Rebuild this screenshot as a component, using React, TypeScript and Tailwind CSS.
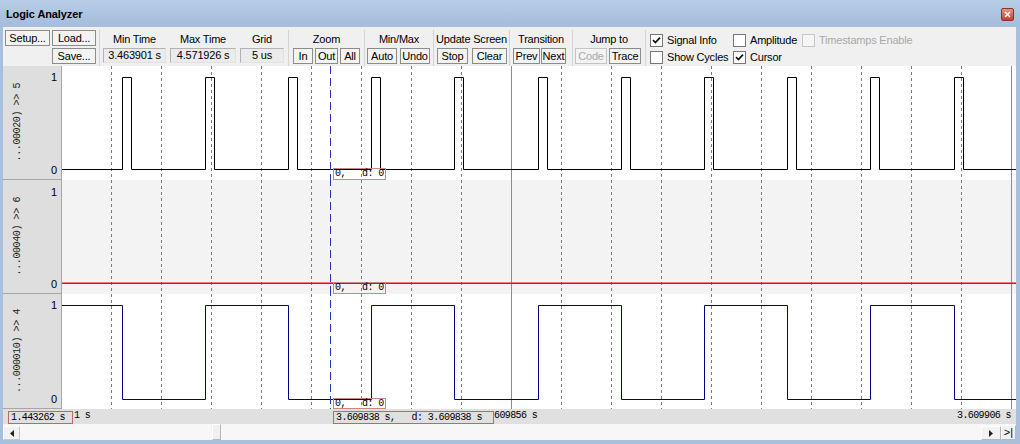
import React from 'react';

const SANS = "font-['Liberation_Sans',Arial,sans-serif]";
const MONO = "font-['Liberation_Mono','DejaVu_Sans_Mono',monospace]";

const PLOT_W = 954;
// signal edges, one every 83.2px
const EDGES = Array.from({ length: 11 }, (_, k) => Math.round(59.5 + 83.2 * k));
// 5 us grid, 50px apart
const GRID = Array.from({ length: 19 }, (_, k) => 49.5 + 50 * k);
const CURSOR_X = 268.5;

function Btn({ label, className, disabled }: { label: string; className: string; disabled?: boolean }) {
  return (
    <div
      className={`h-[16px] flex items-center justify-center border bg-[#f3f3f3] text-[11px] leading-none tracking-[-0.2px] ${
        disabled ? 'border-[#c4c4c4] text-[#a8a8a8]' : 'border-[#8c8c8c] text-black'
      } ${className}`}
    >
      {label}
    </div>
  );
}

function Field({ title, value, className }: { title: string; value: string; className: string }) {
  return (
    <div className={`flex flex-col ${className}`}>
      <div className="h-[17px] pt-[2px] flex items-center justify-center text-[11px] tracking-[-0.2px]">{title}</div>
      <div className="mt-[1px] h-[15px] border border-[#b2b2b2] border-r-[#e2e2e2] border-b-[#e2e2e2] bg-[#ebebeb] flex items-center justify-center text-[11px] tracking-[-0.2px] leading-none">
        {value}
      </div>
    </div>
  );
}

function Group({ title, className, children }: { title: string; className: string; children: React.ReactNode }) {
  return (
    <div className={`border-l border-[#d4d4d4] flex flex-col shrink-0 ${className}`}>
      <div className="h-[17px] pt-[2px] flex items-center justify-center text-[11px] tracking-[-0.2px] whitespace-nowrap">
        {title}
      </div>
      <div className="mt-[1px] flex">{children}</div>
    </div>
  );
}

function Check({ label, checked, disabled }: { label: string; checked?: boolean; disabled?: boolean }) {
  return (
    <div className="flex items-center gap-[4px] h-[13px]">
      <div
        className={`w-[13px] h-[13px] border flex items-center justify-center ${
          disabled ? 'border-[#c6c6c6] bg-[#f5f5f5]' : 'border-[#777] bg-white'
        }`}
      >
        {checked && (
          <svg width="9" height="9" viewBox="0 0 9 9">
            <path d="M1 4.2 L3.4 6.6 L8 1.6" fill="none" stroke="#111" strokeWidth="1.7" />
          </svg>
        )}
      </div>
      <span className={`text-[11px] tracking-[-0.2px] whitespace-nowrap ${disabled ? 'text-[#a9a9a9]' : 'text-black'}`}>
        {label}
      </span>
    </div>
  );
}

function Toolbar() {
  return (
    <div className={`h-[39px] bg-[#f0f0f0] flex pt-[3px] text-black ${SANS}`}>
      <div className="w-[96px] shrink-0 pl-[2px] grid grid-cols-[45px_44px] gap-x-[2px] gap-y-[2px] content-start">
        <Btn label="Setup..." className="w-[45px]" />
        <Btn label="Load..." className="w-[44px]" />
        <div />
        <Btn label="Save..." className="w-[44px]" />
      </div>
      <div className="w-[189px] shrink-0 border-l border-[#d4d4d4] pl-[3px] flex gap-[4px]">
        <Field title="Min Time" value="3.463901 s" className="w-[63px]" />
        <Field title="Max Time" value="4.571926 s" className="w-[66px]" />
        <Field title="Grid" value="5 us" className="w-[44px]" />
      </div>
      <Group title="Zoom" className="w-[76px]">
        <div className="pl-[4px] flex gap-[2px]">
          <Btn label="In" className="w-[20px]" />
          <Btn label="Out" className="w-[23px]" />
          <Btn label="All" className="w-[20px]" />
        </div>
      </Group>
      <Group title="Min/Max" className="w-[69px]">
        <div className="pl-[2px] flex gap-[3px]">
          <Btn label="Auto" className="w-[30px]" />
          <Btn label="Undo" className="w-[30px]" />
        </div>
      </Group>
      <Group title="Update Screen" className="w-[76px]">
        <div className="pl-[3px] flex gap-[4px]">
          <Btn label="Stop" className="w-[31px]" />
          <Btn label="Clear" className="w-[35px]" />
        </div>
      </Group>
      <Group title="Transition" className="w-[63px]">
        <div className="pl-[3px] flex gap-[1px]">
          <Btn label="Prev" className="w-[27px]" />
          <Btn label="Next" className="w-[25px]" />
        </div>
      </Group>
      <Group title="Jump to" className="w-[73px]">
        <div className="pl-[2px] flex gap-[2px]">
          <Btn label="Code" className="w-[32px]" disabled />
          <Btn label="Trace" className="w-[32px]" />
        </div>
      </Group>
      <div className="flex-1 border-l border-[#d4d4d4] pl-[4px] pt-[4px]">
        <div className="grid grid-cols-[83px_69px_auto] gap-y-[4px]">
          <Check label="Signal Info" checked />
          <Check label="Amplitude" />
          <Check label="Timestamps Enable" disabled />
          <Check label="Show Cycles" />
          <Check label="Cursor" checked />
        </div>
      </div>
    </div>
  );
}

function Grid({ h }: { h: number }) {
  return (
    <>
      {GRID.map((x, i) =>
        i === 8 || i === 18 ? (
          <line key={i} x1={x} x2={x} y1={0} y2={h} stroke="#8c8c8c" strokeWidth="1" />
        ) : (
          <line key={i} x1={x} x2={x} y1={0} y2={h} stroke="#7c7c7c" strokeWidth="1" strokeDasharray="3 3" />
        )
      )}
    </>
  );
}

function pulses(lo: number, hi: number) {
  let d = `M0 ${lo}`;
  for (const e of EDGES) d += ` H${e + 0.5} V${hi} H${e + 9.5} V${lo}`;
  return d + ` H${PLOT_W}`;
}

function square(lo: number, hi: number) {
  let d = `M0 ${hi}`;
  let level = hi;
  for (const e of EDGES) {
    level = level === hi ? lo : hi;
    d += ` H${e + 0.5} V${level}`;
  }
  return d + ` H${PLOT_W}`;
}

function Label({ name, oneTop, zeroBottom }: { name: string; oneTop: string; zeroBottom: string }) {
  return (
    <div className="w-[59px] shrink-0 bg-[#dedede] border-r border-b border-[#a6a6a6] flex">
      <div className="w-[28px] flex items-center justify-center">
        <span className={`${MONO} text-[10px] tracking-[-0.4px] text-[#222] whitespace-pre [writing-mode:vertical-rl] rotate-180`}>
          {name}
        </span>
      </div>
      <div className={`flex-1 flex flex-col justify-between items-end pr-[4px] text-[11px] leading-[12px] ${SANS} ${oneTop} ${zeroBottom}`}>
        <span>1</span>
        <span>0</span>
      </div>
    </div>
  );
}

function ValueBox({ className }: { className: string }) {
  return (
    <div
      className={`absolute left-[271px] w-[53px] border border-[#c48a8a] ${MONO} text-[10px] tracking-[-0.6px] leading-none whitespace-pre pl-[1px] flex items-center ${className}`}
    >
      {'0,   d: 0'}
    </div>
  );
}

function Plot() {
  return (
    <div className="h-[343px] flex flex-col">
      <div className="h-[114px] flex">
        <Label name="...00020) >> 5" oneTop="pt-[5px]" zeroBottom="pb-[3px]" />
        <div className="relative flex-1 bg-white">
          <svg width={PLOT_W} height={114} className="block">
            <Grid h={114} />
            <path d={pulses(103.5, 11.5)} fill="none" stroke="#000" strokeWidth="1" />
            <line x1={CURSOR_X} x2={CURSOR_X} y1={0} y2={114} stroke="#2233bb" strokeDasharray="8 4" />
          </svg>
          <ValueBox className="top-[102px] h-[12px]" />
        </div>
      </div>
      <div className="h-[114px] flex">
        <Label name="...00040) >> 6" oneTop="pt-[6px]" zeroBottom="pb-[3px]" />
        <div className="relative flex-1 bg-[#f3f3f3]">
          <svg width={PLOT_W} height={114} className="block">
            <Grid h={114} />
            <rect x={0} y={102.5} width={PLOT_W} height={1.5} fill="#ff0000" />
            <line x1={CURSOR_X} x2={CURSOR_X} y1={-2} y2={114} stroke="#2233bb" strokeDasharray="8 4" />
          </svg>
          <ValueBox className="top-[102px] h-[12px]" />
        </div>
      </div>
      <div className="h-[115px] flex">
        <Label name="...000010) >> 4" oneTop="pt-[5px]" zeroBottom="pb-[3px]" />
        <div className="relative flex-1 bg-white">
          <svg width={PLOT_W} height={115} className="block">
            <Grid h={115} />
            <path d={square(105.5, 11.5)} fill="none" stroke="#000080" strokeWidth="1" />
            <line x1={CURSOR_X} x2={CURSOR_X} y1={-6} y2={115} stroke="#2233bb" strokeDasharray="8 4" />
          </svg>
          <ValueBox className="top-[104px] h-[11px]" />
        </div>
      </div>
    </div>
  );
}

function TimeAxis() {
  // the two cursor boxes hide most of the axis labels under them
  return (
    <div className={`relative h-[15px] bg-[#e0e0e0] ${MONO} text-[10px] tracking-[-0.6px] leading-none text-black whitespace-pre`}>
      <span className="absolute left-[71px] top-[2px]">1 s</span>
      <span className="absolute left-[491px] top-[2px]">609856 s</span>
      <span className="absolute right-[5px] top-[2px]">3.609906 s</span>
      <div className="absolute left-[5px] top-[2px] h-[13px] w-[65px] border border-[#b86a6a] bg-[#e0e0e0] pl-[2px] flex items-center">
        1.443262 s
      </div>
      <div className="absolute left-[330px] top-[2px] h-[13px] w-[161px] border border-[#b86a6a] bg-[#e0e0e0] pl-[2px] flex items-center">
        {'3.609838 s,   d: 3.609838 s'}
      </div>
    </div>
  );
}

function Scrollbar() {
  return (
    <div className="h-[16px] bg-[#f7f7f7] flex items-center">
      <div className="w-[17px] h-[14px] mt-[2px] border border-[#c9c9c9] border-t-white border-l-white bg-[#f2f2f2] flex items-center justify-center">
        <svg width="4" height="7" viewBox="0 0 4 7">
          <path d="M4 0 L0 3.5 L4 7 Z" fill="#222" />
        </svg>
      </div>
      <div className="flex-1 h-full">
        <div className="ml-[192px] w-[9px] h-full border border-[#b8b8b8] border-t-white border-l-white bg-[#f0f0f0]" />
      </div>
      <div className="w-[20px] h-[14px] mt-[2px] border border-[#b8b8b8] border-t-white border-l-white bg-[#f2f2f2] flex items-center justify-center">
        <svg width="4" height="7" viewBox="0 0 4 7">
          <path d="M0 0 L4 3.5 L0 7 Z" fill="#222" />
        </svg>
      </div>
      <div className={`w-[15px] h-[15px] border border-[#b8b8b8] border-t-white border-l-white bg-[#f2f2f2] flex items-center justify-center text-[11px] leading-none ${SANS}`}>
        &gt;|
      </div>
    </div>
  );
}

export default function App() {
  return (
    <div className={`w-[1020px] h-[444px] bg-[#a9c0dc] flex flex-col overflow-hidden ${SANS}`}>
      <div className="h-[27px] shrink-0 bg-gradient-to-b from-[#b7cce6] to-[#a4bddb] flex items-center justify-between pl-[6px] pr-[6px] pt-[2px]">
        <span className="text-[11px] font-bold text-black tracking-[-0.1px]">Logic Analyzer</span>
        <div className="w-[13px] h-[13px] rounded-[2px] border border-[#8d3028] bg-gradient-to-b from-[#e4948a] to-[#c23a2e] flex items-center justify-center">
          <svg width="7" height="7" viewBox="0 0 7 7">
            <path d="M1 1 L6 6 M6 1 L1 6" stroke="#fff" strokeWidth="1.6" />
          </svg>
        </div>
      </div>
      <div className="ml-[3px] mr-[4px] flex flex-col">
        <Toolbar />
        <Plot />
        <TimeAxis />
        <Scrollbar />
      </div>
    </div>
  );
}
